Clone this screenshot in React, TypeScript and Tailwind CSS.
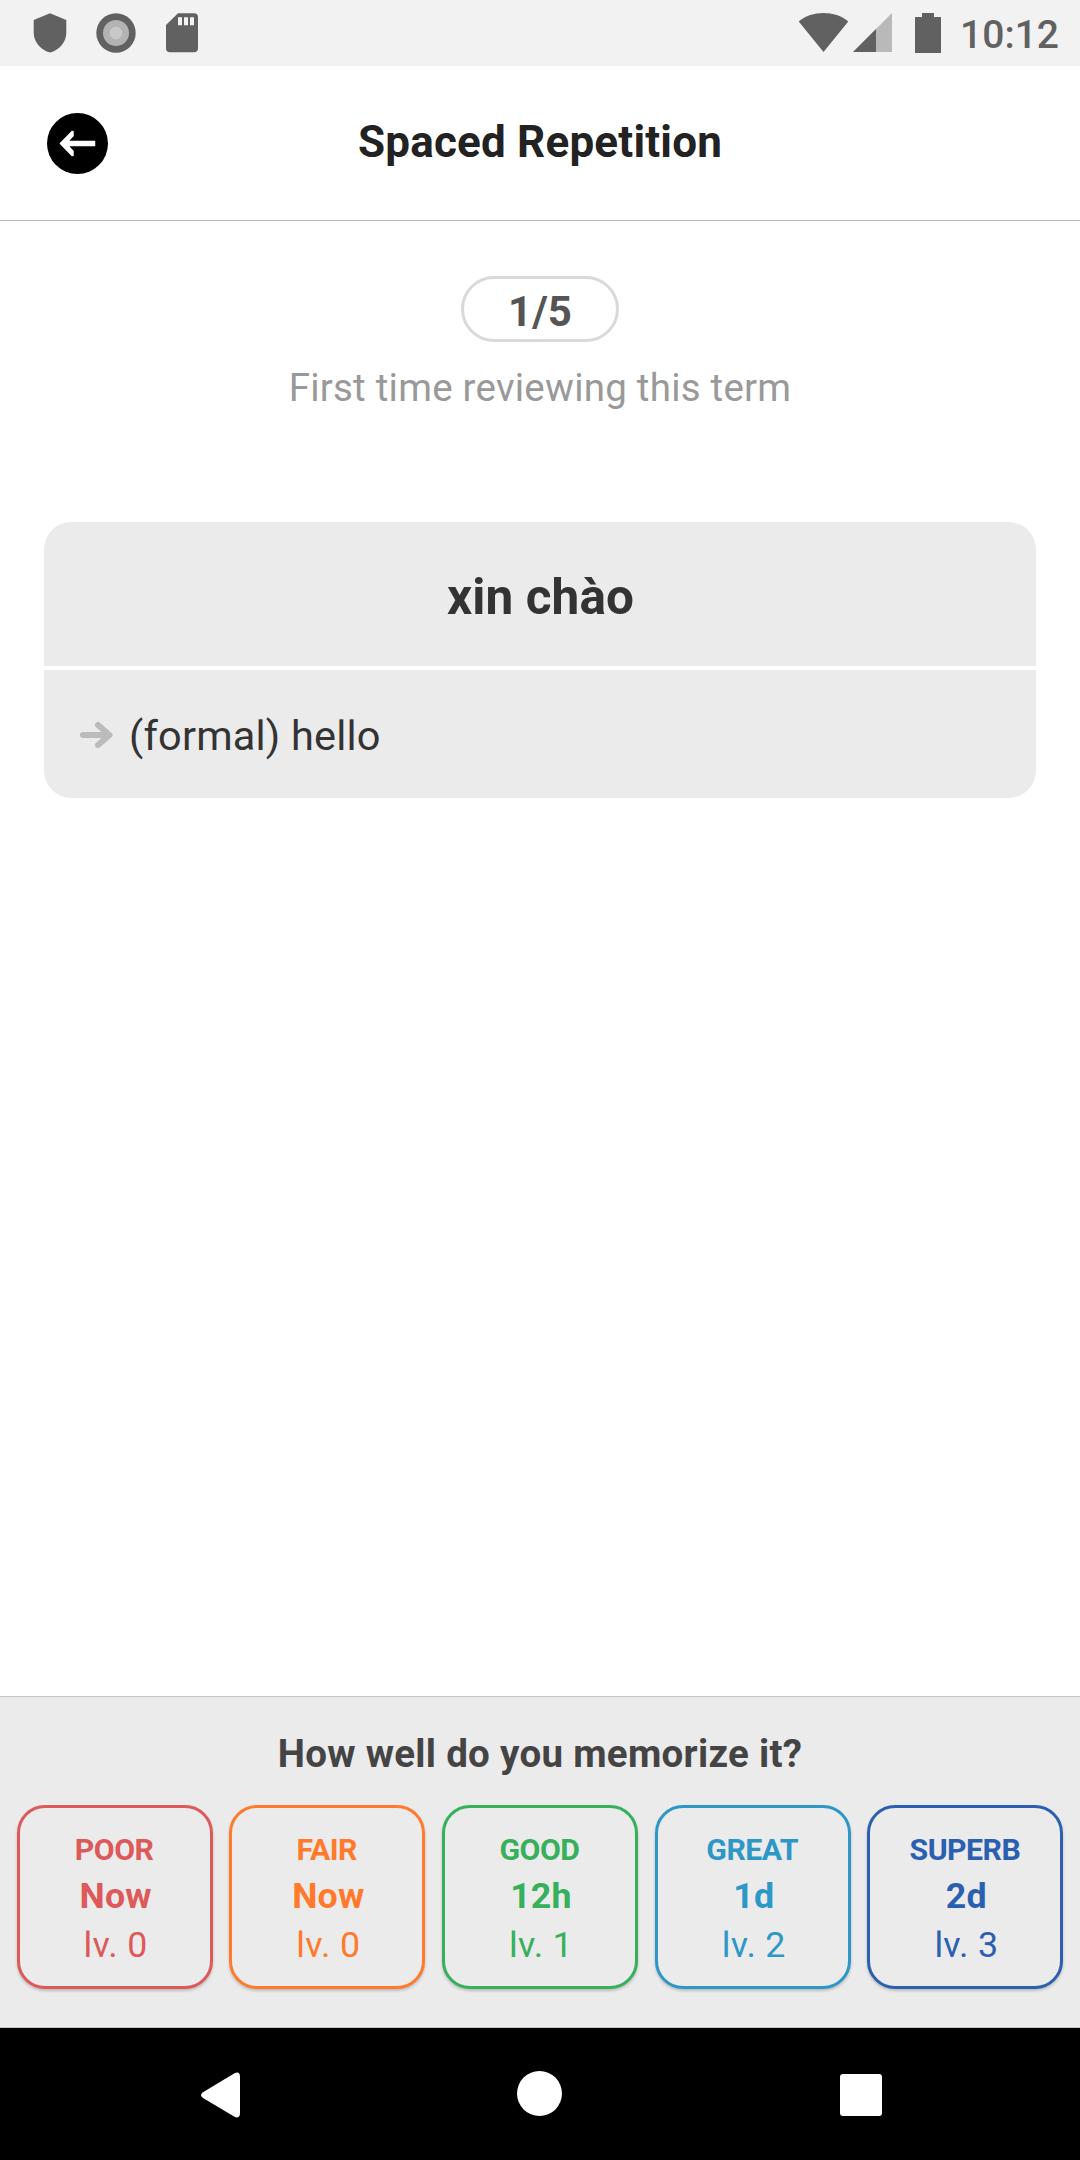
type Rating = { name: string; due: string; level: string; tone: string };

const ratings: Rating[] = [
  { name: 'POOR', due: 'Now', level: 'lv. 0', tone: 'border-[#dc5a5a] text-[#dc5a5a]' },
  { name: 'FAIR', due: 'Now', level: 'lv. 0', tone: 'border-[#ff7a2c] text-[#ff7a2c]' },
  { name: 'GOOD', due: '12h', level: 'lv. 1', tone: 'border-[#36b05a] text-[#36b05a]' },
  { name: 'GREAT', due: '1d', level: 'lv. 2', tone: 'border-[#2d98c5] text-[#2d98c5]' },
  { name: 'SUPERB', due: '2d', level: 'lv. 3', tone: 'border-[#2b60b0] text-[#2b60b0]' },
];

function StatusBar() {
  return (
    <div className="flex h-[66px] shrink-0 items-center justify-between bg-[#f2f2f2] text-[#616161]">
      <svg width="200" height="66" viewBox="0 0 200 66" fill="currentColor">
        <path d="M50 13.3 66.300 20v13c0 9-7 17-16.300 19.600C41 50 33.700 42 33.700 33V20z" />
        <circle cx="116" cy="33" r="19.700" />
        <circle cx="116" cy="33" r="13" fill="#b3b3b3" />
        <circle cx="116" cy="33" r="6.200" fill="#c9c9c9" />
        <path
          fillRule="evenodd"
          d="M178 13.300h16a4 4 0 0 1 4 4v31a4 4 0 0 1-4 4h-24a4 4 0 0 1-4-4V25zM178 17.300v8h4v-8zM184 17.300v8h4v-8zM190 17.300v8h4v-8z"
        />
      </svg>
      <div className="flex items-center">
        <svg width="148" height="66" viewBox="795 0 148 66" fill="currentColor">
          <path d="M798.700 21.500C812 10.200 835 10.200 848.300 21.500L823.500 52z" />
          <path d="M892 13v39h-39z" fill="#b9b9b9" />
          <path d="M876 29v23h-23z" />
          <path d="M922 13h12v4h7v36h-26V17h7z" />
        </svg>
        <span className="ml-[17px] mr-[21px] pt-[4px] text-[39px] font-medium leading-[62px]">10:12</span>
      </div>
    </div>
  );
}

function Header() {
  return (
    <header className="grid h-[155px] shrink-0 grid-cols-[61px_1fr_61px] items-center border-b border-[#b8b8b8] px-[47px]">
      <svg width="61" height="61" viewBox="0 0 61 61">
        <circle cx="30.500" cy="30.500" r="30.500" />
        <path
          d="M13.400 30.500 25.300 18.400 26 18.700V22.700L20.700 28.500H47.500V32.500H20.700L26 38.300V42.300L25.300 42.600z"
          fill="#fff"
          stroke="#fff"
          strokeWidth="1.500"
          strokeLinejoin="round"
        />
      </svg>
      <h1 className="pb-[2px] text-center text-[44px] font-bold leading-[52px] tracking-[0.2px] text-[#222]">
        Spaced Repetition
      </h1>
    </header>
  );
}

function TermCard() {
  return (
    <section className="mx-[44px] mt-[106px] overflow-hidden rounded-[27.5px] text-[#333]">
      <div className="flex h-[144px] items-center justify-center bg-[#ebebeb] pl-px pt-[6px] text-[49.5px] font-bold tracking-[0.1px]">
        xin chào
      </div>
      <div className="mt-1 flex h-[128px] items-center bg-[#ebebeb] pl-[36px]">
        <svg
          className="mt-[2px]"
          width="33"
          height="26"
          viewBox="0 0 33 26"
          fill="none"
          stroke="#bbb"
          strokeWidth="6"
          strokeLinecap="round"
          strokeLinejoin="round"
        >
          <path d="M3 13h26M18 3l11.500 10L18 23" />
        </svg>
        <span className="ml-[16px] pt-[5px] text-[41.5px] tracking-[0.2px]">(formal) hello</span>
      </div>
    </section>
  );
}

function RatingPanel() {
  return (
    <section className="mt-auto flex h-[332px] shrink-0 flex-col border-y border-[#c6c6c6] bg-[#ebebeb]">
      <h2 className="mt-[34px] text-center text-[38.5px] font-bold leading-[46px] tracking-[0.3px] text-[#444]">
        How well do you memorize it?
      </h2>
      <div className="mt-[28px] grid grid-cols-5 gap-[16.5px] px-[16.5px]">
        {ratings.map((r) => (
          <button
            key={r.name}
            className={`flex h-[184px] flex-col items-center rounded-[28px] border-[3px] bg-[#ebebeb] pt-[24px] shadow-[0_2px_3px_rgba(0,0,0,0.2)] ${r.tone}`}
          >
            <span className="pr-px text-[30.25px] font-bold leading-[36px] tracking-[-0.5px]">{r.name}</span>
            <span className="mt-[4px] pl-[2px] text-[35.75px] font-bold leading-[48px] tracking-[0.2px]">{r.due}</span>
            <span className="mt-px pl-[2px] text-[35.75px] leading-[48px] tracking-[0.3px]">{r.level}</span>
          </button>
        ))}
      </div>
    </section>
  );
}

function NavBar() {
  return (
    <nav className="flex h-[132px] shrink-0 items-center justify-between bg-black pl-[201px] pr-[198.5px]">
      <svg className="mt-px" width="39" height="46" viewBox="0 0 39 46" fill="#fff">
        <path d="M2 20.200 33.500 1.200Q39 -1 39 5v36q0 6-5.500 3.800L2 26q-4-2.900 0-5.800z" />
      </svg>
      <span className="mb-px size-[45px] rounded-full bg-white" />
      <span className="mt-px size-[42px] rounded-[3px] bg-white" />
    </nav>
  );
}

export default function App() {
  return (
    <div className="flex h-[2160px] w-[1080px] flex-col overflow-hidden bg-white font-['Roboto',sans-serif]">
      <StatusBar />
      <Header />
      <main className="flex flex-col">
        <div className="mt-[55px] flex h-[66px] w-[158px] items-center justify-center self-center rounded-full border-[3px] border-[#d9d9d9] pt-[5px] text-[42px] font-bold text-[#555]">
          1/5
        </div>
        <p className="mt-[18px] text-center text-[38.5px] leading-[56px] tracking-[0.23px] text-[#999]">
          First time reviewing this term
        </p>
        <TermCard />
      </main>
      <RatingPanel />
      <NavBar />
    </div>
  );
}
